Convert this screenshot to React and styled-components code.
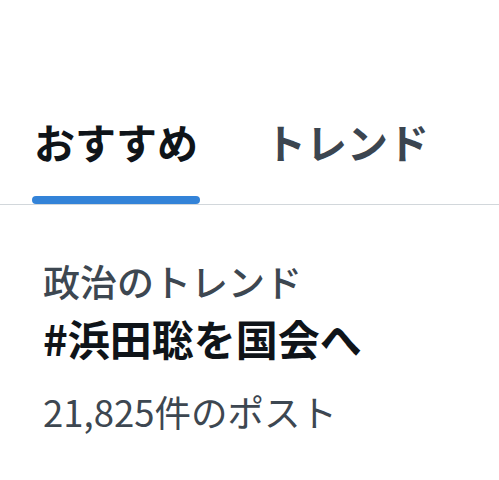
import React from 'react';
import styled, { createGlobalStyle } from 'styled-components';

const GlobalStyle = createGlobalStyle`
    html, body {
        margin: 0;
        padding: 0;
        background: #ffffff;
    }
    body {
        font-family: "Noto Sans CJK JP", "Noto Sans", sans-serif;
        width: 499px;
        height: 480px;
        overflow: hidden;
    }
`;

export default function App () {
    const tabs = [
        { label: 'おすすめ', active: true },
        { label: 'トレンド', active: false },
    ];

    return (
        <>
            <GlobalStyle />
            <Page>
                <TabBar>
                    {tabs.map((tab) => (
                        <Tab key={tab.label} active={tab.active}>
                            <span>{tab.label}</span>
                            {tab.active && <Indicator />}
                        </Tab>
                    ))}
                </TabBar>

                <Trend>
                    <Category>政治のトレンド</Category>
                    <Title>#浜田聡を国会へ</Title>
                    <Count>21,825件のポスト</Count>
                </Trend>
            </Page>
        </>
    );
}

const Page = styled.main`
    display: flex;
    flex-direction: column;
    padding-top: 112px;
`;

const TabBar = styled.nav`
    border-bottom: 1px solid #d2d7db;
    display: flex;
    gap: 63px;
    padding-left: 32px;
`;

const Tab = styled.div`
    color: ${(p) => (p.active ? '#0f1419' : '#3b4550')};
    display: flex;
    flex-direction: column;
    font-size: 41px;
    font-weight: 700;
    line-height: 58px;

    span {
        padding: 0 2px;
    }
`;

const Indicator = styled.div`
    background-color: #3383d8;
    border-radius: 4px;
    height: 8px;
    margin-top: 26px;
    width: 100%;
`;

const Trend = styled.section`
    display: flex;
    flex-direction: column;
    padding: 52px 43px 0 43px;
`;

const Category = styled.div`
    color: #3d4751;
    font-size: 37px;
    font-weight: 500;
    line-height: 48px;
`;

const Title = styled.div`
    color: #0f1419;
    font-size: 42px;
    font-weight: 700;
    line-height: 58px;
    margin-top: 4px;
`;

const Count = styled.div`
    color: #3d4751;
    font-size: 36.5px;
    font-weight: 400;
    line-height: 54px;
    margin-top: 18px;
`;
